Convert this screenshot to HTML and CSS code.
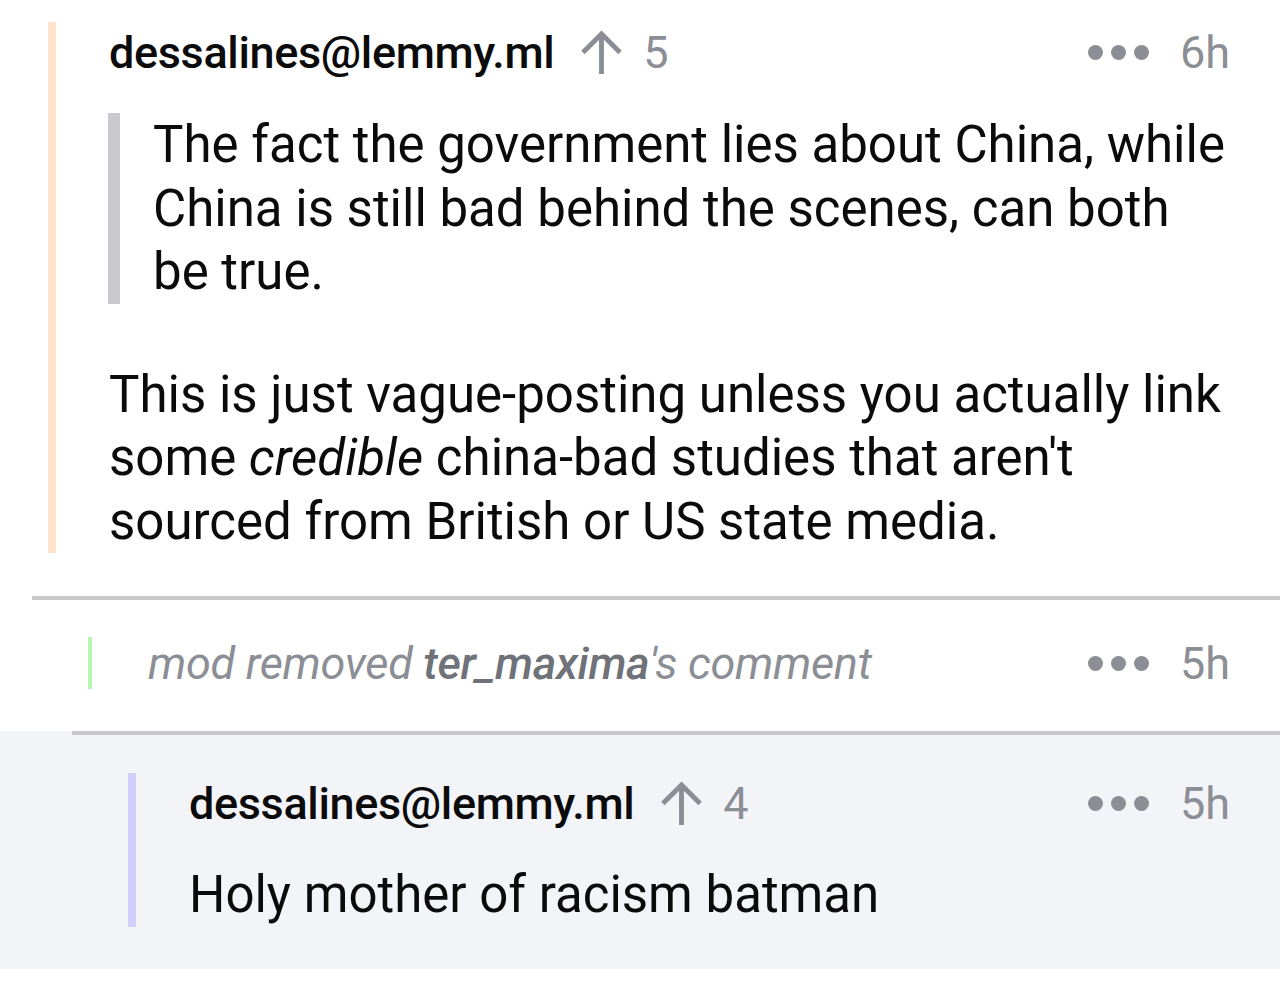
FILE: index.html
```
<!DOCTYPE html>
<html>
  <head>
    <meta charset="utf-8" />
    <title>Comments</title>
    <link rel="stylesheet" href="styles.css">
  </head>
  <body>
    <div class="comment top">
      <div class="meta">
        <div class="who">
          <span class="user">dessalines@lemmy.ml</span>
          <svg class="arrow" viewBox="0 0 44 46"><path d="M22 45V4M3 23L22 4l19 19" /></svg>
          <span class="score">5</span>
        </div>
        <div class="when">
          <span class="dots"><i></i><i></i><i></i></span>
          <span>6h</span>
        </div>
      </div>
      <blockquote>
        The fact the government lies about China, while<br>
        China is still bad behind the scenes, can both<br>
        be true.
      </blockquote>
      <p class="body">
        This is just vague-posting unless you actually link<br>
        some <em>credible</em> china-bad studies that aren't<br>
        sourced from British or US state media.
      </p>
    </div>

    <hr class="divider first">

    <div class="modlog">
      <div class="modtext">mod removed <strong>ter_maxima</strong>'s comment</div>
      <div class="when">
        <span class="dots"><i></i><i></i><i></i></span>
        <span>5h</span>
      </div>
    </div>

    <div class="reply-wrap">
      <hr class="divider second">
      <div class="comment reply">
        <div class="meta">
          <div class="who">
            <span class="user">dessalines@lemmy.ml</span>
            <svg class="arrow" viewBox="0 0 44 46"><path d="M22 45V4M3 23L22 4l19 19" /></svg>
            <span class="score">4</span>
          </div>
          <div class="when">
            <span class="dots"><i></i><i></i><i></i></span>
            <span>5h</span>
          </div>
        </div>
        <p class="body">Holy mother of racism batman</p>
      </div>
    </div>
  </body>
</html>
```

FILE: styles.css
```
html, body {
  margin:0;
  padding:0;
  background-color:#fff;
  font-family:Roboto, "Liberation Sans", sans-serif;
  color:#0b0b0b;
}

.comment {
  border-left:8px solid #fde2cc;
}

.comment.top {
  margin:22px 0 0 48px;
  padding:0 50px 0 53px;
}

.meta {
  display:flex;
  justify-content:space-between;
  align-items:center;
  height:60px;
}

.who {
  display:flex;
  align-items:center;
}

.user {
  font-size:45px;
  font-weight:500;
  letter-spacing:-0.35px;
}

.arrow {
  width:43px;
  height:45px;
  margin:0 20px 0 26px;
  fill:none;
  stroke:#8b8e95;
  stroke-width:5;
}

.score, .when {
  font-size:45px;
  color:#8b8e95;
}

.when {
  display:flex;
  align-items:center;
}

.dots {
  display:flex;
  gap:8px;
  margin-right:31px;
}

.dots i {
  display:block;
  width:15px;
  height:15px;
  border-radius:50%;
  background-color:#8b8e95;
}

blockquote {
  margin:31px 0 0 -1px;
  padding:0 0 0 33px;
  border-left:12px solid #c9c9ce;
  font-size:51px;
  line-height:63.5px;
}

.body {
  margin:0;
  font-size:51px;
  line-height:63.5px;
}

.comment.top .body {
  margin-top:59px;
}

em {
  font-style:italic;
}

.divider {
  border:0;
  margin:0;
  height:4px;
  background-color:#c9c9cc;
}

.divider.first {
  margin:43px 0 0 32px;
}

.modlog {
  display:flex;
  justify-content:space-between;
  align-items:center;
  margin:37px 50px 0 88px;
  height:52px;
  border-left:4px solid #b3f7b3;
  padding-left:56px;
}

.modtext {
  font-size:45px;
  font-style:italic;
  color:#8b8e95;
  letter-spacing:-0.3px;
}

.modtext strong {
  font-weight:500;
  color:#6f7278;
}

.reply-wrap {
  margin-top:42px;
  background-color:#f3f4f8;
  padding-bottom:42px;
}

.divider.second {
  margin-left:72px;
}

.comment.reply {
  margin:38px 0 0 128px;
  padding:0 50px 0 53px;
  border-left-color:#cfcffa;
}

.comment.reply .body {
  margin-top:30px;
}
```
